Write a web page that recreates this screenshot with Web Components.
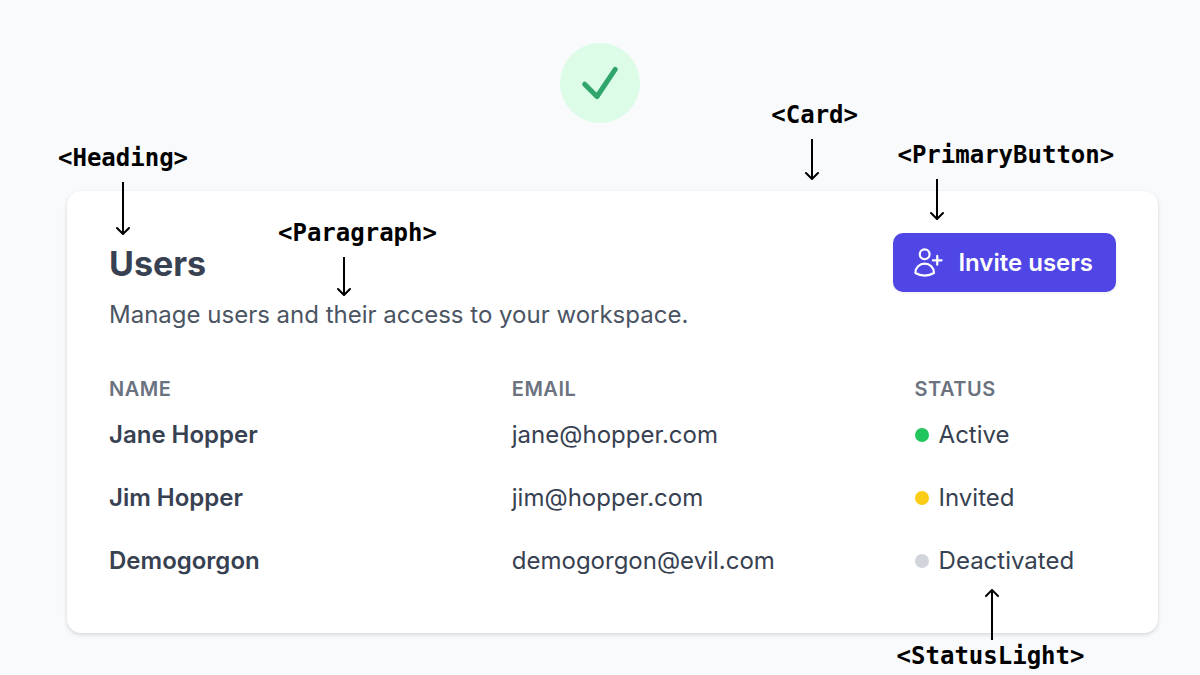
<!DOCTYPE html>
<html lang="en">
<head>
<meta charset="utf-8">
<meta name="viewport" content="width=device-width, initial-scale=1">
<title>Users – component anatomy</title>
<style>
  body { margin: 0; background: #f9fafc; color: #374151; font-family: Inter, "Liberation Sans", sans-serif; font-size: 24px; }
</style>
</head>
<body>
<anatomy-page>
  <check-badge slot="badge"></check-badge>
  <user-card>
    <tag-note slot="note" class="card-note" name="Card" length="41" tip="41"></tag-note>
    <card-heading slot="title">Users</card-heading>
    <card-paragraph slot="text">Manage users and their access to your workspace.</card-paragraph>
    <primary-button slot="action">Invite users</primary-button>
    <users-table></users-table>
  </user-card>
</anatomy-page>

<script>
const define = (name, html, setup) => {
  const template = document.createElement('template');
  template.innerHTML = html;
  customElements.define(name, class extends HTMLElement {
    constructor() {
      super();
      this.attachShadow({ mode: 'open' }).append(template.content.cloneNode(true));
    }
    connectedCallback() { if (setup) setup(this, this.shadowRoot); }
  });
};

/* A code label with an arrow; "tip" is the arrow's distance from the label's left edge. */
define('tag-note', `
  <style>
    :host { position: absolute; display: flex; flex-direction: column; gap: 9px; color: #000; pointer-events: none; z-index: 1; }
    :host([up]) { flex-direction: column-reverse; gap: 1px; }
    code { font: 700 24px/30px "DejaVu Sans Mono", monospace; white-space: nowrap; }
    svg { display: block; }
    path { fill: none; stroke: currentColor; stroke-width: 2; stroke-linecap: round; stroke-linejoin: round; }
    .shaft { stroke-linecap: butt; }
  </style>
  <code></code><svg width="16"><path class="shaft"/><path class="head"/></svg>`,
  (el, root) => {
    const len = Number(el.getAttribute('length'));
    root.querySelector('code').textContent = '<' + el.getAttribute('name') + '>';
    const svg = root.querySelector('svg');
    svg.setAttribute('height', len);
    svg.style.marginLeft = (el.getAttribute('tip') - 8) + 'px';
    const up = el.hasAttribute('up');
    root.querySelector('.shaft').setAttribute('d', up ? `M8 1V${len}` : `M8 0V${len - 1}`);
    root.querySelector('.head').setAttribute('d', up ? 'M2 7L8 1L14 7' : `M2 ${len - 7}L8 ${len - 1}L14 ${len - 7}`);
  });

define('check-badge', `
  <style>
    :host { display: block; width: 80px; height: 80px; border-radius: 50%; background: #dcfce7; }
    svg { display: block; }
  </style>
  <svg width="80" height="80" viewBox="0 0 80 80" fill="none" stroke="#30a66d" stroke-width="5" stroke-linecap="round" stroke-linejoin="round" aria-label="Correct" role="img">
    <path d="M24.7 41.2 37 53.5 55.2 26.4"/>
  </svg>`);

define('card-heading', `
  <style>
    :host { display: block; position: relative; }
    h2 { margin: 0; font-size: 34px; line-height: 62px; font-weight: 700; color: #374151; }
    tag-note { left: -51px; bottom: calc(100% - 2px); }
  </style>
  <tag-note name="Heading" length="53" tip="65"></tag-note>
  <h2><slot></slot></h2>`);

define('card-paragraph', `
  <style>
    :host { display: block; position: relative; }
    p { margin: 0; font-size: 24px; line-height: 40px; color: #4b5563; }
    tag-note { left: 169px; bottom: calc(100% - 1px); }
  </style>
  <tag-note name="Paragraph" length="39" tip="66"></tag-note>
  <p><slot></slot></p>`);

define('primary-button', `
  <style>
    :host { display: block; position: relative; }
    button { display: flex; align-items: center; gap: 12px; padding: 12px 23px 12px 18px; border: 0; border-radius: 10px;
      background: #4f46e5; color: #fff; font: 600 24px/35px Inter, "Liberation Sans", sans-serif; white-space: nowrap;
      box-shadow: 0 1px 3px rgb(0 0 0 / .08); cursor: pointer; }
    tag-note { left: 4px; bottom: calc(100% + 13px); }
  </style>
  <tag-note name="PrimaryButton" length="41" tip="40"></tag-note>
  <button type="button">
    <svg width="35" height="35" viewBox="0 0 24 24" fill="none" stroke="currentColor" stroke-width="1.5" stroke-linecap="round" stroke-linejoin="round" aria-hidden="true">
      <path d="M18 7.5v3m0 0v3m0-3h3m-3 0h-3m-2.25-4.125a3.375 3.375 0 11-6.75 0 3.375 3.375 0 016.75 0zM3 19.235v-.11a6.375 6.375 0 0112.75 0v.109A12.318 12.318 0 019.374 21c-2.331 0-4.512-.645-6.374-1.766z"/>
    </svg>
    <span><slot></slot></span>
  </button>`);

define('status-light', `
  <style>
    :host { display: inline-flex; position: relative; align-items: center; gap: 10px; }
    i { width: 14px; height: 14px; border-radius: 50%; background: #d1d5db; }
    :host([state="active"]) i { background: #22c55e; }
    :host([state="invited"]) i { background: #facc15; }
  </style>
  <i></i><span><slot></slot></span><slot name="note"></slot>`);

define('users-table', `
  <style>
    :host { display: block; }
    table { width: 100%; table-layout: fixed; border-collapse: collapse; text-align: left; }
    th, td { padding: 0; }
    thead th { height: 28px; font-size: 20px; line-height: 28px; font-weight: 600; color: #6b7280; text-transform: uppercase; letter-spacing: .025em; }
    thead th:nth-child(-n+2) { width: 40%; }
    tbody th, td { height: 63px; font-size: 24px; line-height: 35px; font-weight: 400; color: #374151; white-space: nowrap; }
    tbody th { font-weight: 600; }
    status-light { vertical-align: top; }
    tag-note { left: -18px; top: calc(100% + 11px); }
  </style>
  <table>
    <thead><tr><th scope="col">Name</th><th scope="col">Email</th><th scope="col">Status</th></tr></thead>
    <tbody>
      <tr><th scope="row">Jane Hopper</th><td>jane@hopper.com</td><td><status-light state="active">Active</status-light></td></tr>
      <tr><th scope="row">Jim Hopper</th><td>jim@hopper.com</td><td><status-light state="invited">Invited</status-light></td></tr>
      <tr><th scope="row">Demogorgon</th><td>demogorgon@evil.com</td><td><status-light state="deactivated">Deactivated<tag-note slot="note" up name="StatusLight" length="51" tip="95"></tag-note></status-light></td></tr>
    </tbody>
  </table>`);

define('user-card', `
  <style>
    :host { display: block; position: relative; padding: 42px 42px 41px; border-radius: 14px; background: #fff;
      box-shadow: 0 2px 5px rgb(0 0 0 / .1), 0 1px 3px rgb(0 0 0 / .06); }
    header { display: flex; justify-content: space-between; align-items: flex-start; gap: 24px; margin-bottom: 40px; }
    ::slotted(.card-note) { right: 300px; bottom: calc(100% + 11px); }
  </style>
  <slot name="note"></slot>
  <header>
    <div><slot name="title"></slot><slot name="text"></slot></div>
    <slot name="action"></slot>
  </header>
  <slot></slot>`);

define('anatomy-page', `
  <style>
    :host { display: flex; flex-direction: column; gap: 68px; box-sizing: border-box; min-height: 100vh; padding: 43px 42px 42px 67px; }
    .badge { display: flex; justify-content: center; margin-left: -25px; }
  </style>
  <div class="badge"><slot name="badge"></slot></div>
  <main><slot></slot></main>`);
</script>
</body>
</html>
